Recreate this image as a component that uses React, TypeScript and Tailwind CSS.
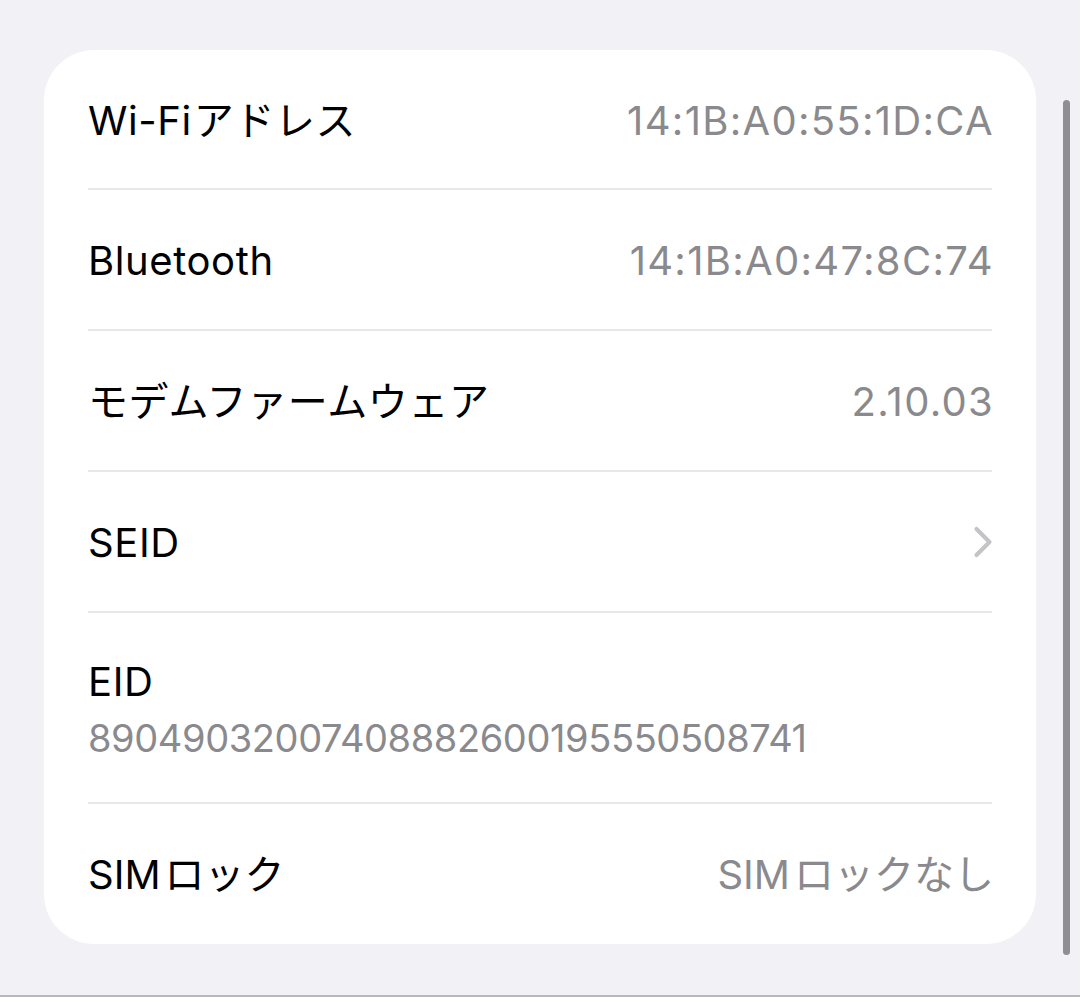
import { ChevronRight } from "lucide-react"
import type { ReactNode } from "react"

const font = { fontFamily: 'Inter, "Noto Sans CJK JP", sans-serif' }

const Divider = () => <div className="h-[2px] bg-[#e6e6eb]" />

const Row = ({
  label,
  value,
  chevron,
  first,
}: {
  label: ReactNode
  value?: ReactNode
  chevron?: boolean
  first?: boolean
}) => (
  <div className={`flex items-center justify-between ${first ? "h-[138px]" : "h-[139px]"}`}>
    <span className="pt-[3px] text-[40px] text-black tracking-[0.6px]">{label}</span>
    {value && (
      <span className="-mr-[2px] pt-[3px] text-[40px] text-[#8a8a8e] tracking-[1.3px]">{value}</span>
    )}
    {chevron && (
      <ChevronRight className="h-[52px] w-[52px] -mr-[17px] text-[#c4c4c7]" strokeWidth={1.9} />
    )}
  </div>
)

const App = () => {
  return (
    <div
      className="flex h-[997px] w-[1080px] border-b-[2px] border-[#b9b9bd] bg-[#f1f1f6] pl-[44px] pt-[50px]"
      style={font}
    >
      <div className="h-[894px] w-[992px] rounded-[50px] bg-white px-[44px]">
        <Row
          first
          label={
            <>
              <span className="mr-[2px]">Wi-Fi</span>アドレス
            </>
          }
          value="14:1B:A0:55:1D:CA"
        />
        <Divider />
        <Row label="Bluetooth" value="14:1B:A0:47:8C:74" />
        <Divider />
        <Row label="モデムファームウェア" value="2.10.03" />
        <Divider />
        <Row label="SEID" chevron />
        <Divider />
        <div className="flex h-[189px] flex-col justify-center gap-[8px]">
          <span className="text-[40px] leading-[52px] text-black tracking-[0.6px]">EID</span>
          <span className="text-[38px] leading-[44px] text-[#8a8a8e] tracking-[-0.4px]">
            89049032007408882600195550508741
          </span>
        </div>
        <Divider />
        <Row
          label={
            <span className="tracking-[0px]">
              <span className="mr-[4px]">SIM</span>ロック
            </span>
          }
          value={
            <span className="tracking-[0px]">
              <span className="mr-[4px]">SIM</span>ロックなし
            </span>
          }
        />
      </div>
      <div className="ml-[27px] mt-[50px] h-[855px] w-[7px] rounded-full bg-[#8e8e93]" />
    </div>
  )
}

export default App
